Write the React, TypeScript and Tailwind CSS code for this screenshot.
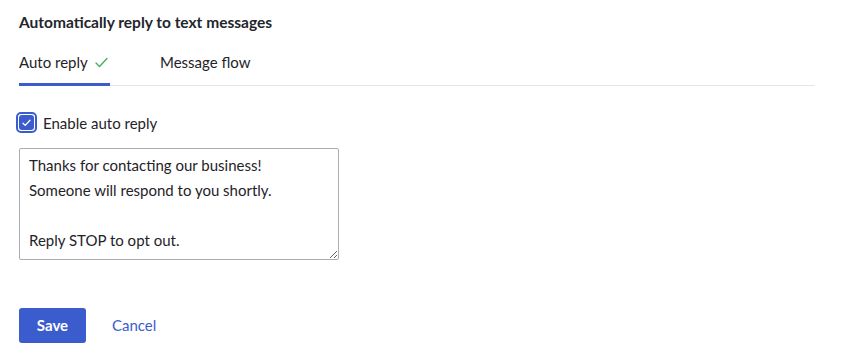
import React from "react";

export default function App() {
  return (
    <div className="w-[845px] h-[358px] bg-white text-[#1f2329] font-['Lato',sans-serif] pl-[19px] pt-[13px]">
      <h1 className="text-[15.5px] font-bold leading-[19px] text-[#22262b]">Automatically reply to text messages</h1>
      <div className="mt-[20px] w-[796px] flex border-b border-[#e3e5ea]">
        <div className="w-[91px] h-[34px] flex items-start border-b-[3px] border-[#3a5ccc] -mb-px">
          <span className="text-[15px] leading-[20px]">Auto reply</span>
          <svg className="ml-[7px] mt-[5px]" width="13" height="11" viewBox="0 0 13 11" fill="none">
            <path d="M1 6l3.5 3.5L12 1.5" stroke="#3fae5a" strokeWidth="1.3" strokeLinecap="round" strokeLinejoin="round" />
          </svg>
        </div>
        <div className="ml-[50px] text-[15px] leading-[20px]">Message flow</div>
      </div>
      <label className="mt-[26px] flex items-center -ml-[3px] h-[21px]">
        <span className="w-[21px] h-[21px] rounded-[5px] border-[2.5px] border-[#3a5ccc] p-[1px] flex">
          <span className="flex-1 rounded-[3px] bg-[#3a5ccc] flex items-center justify-center">
            <svg width="9" height="8" viewBox="0 0 9 8" fill="none">
              <path d="M1 4.2l2.2 2.2L8 1.3" stroke="white" strokeWidth="1.3" strokeLinecap="round" strokeLinejoin="round" />
            </svg>
          </span>
        </span>
        <span className="ml-[6px] text-[15px] leading-[20px]">Enable auto reply</span>
      </label>
      <textarea
        className="mt-[15px] block w-[320px] h-[112px] border border-[#a9adb4] rounded-[2px] px-[9px] pt-[4px] text-[15px] leading-[25px] text-[#1f2329] resize-y outline-none font-['Lato',sans-serif]"
        defaultValue={"Thanks for contacting our business!\nSomeone will respond to you shortly.\n\nReply STOP to opt out."}
      />
      <div className="mt-[48px] flex items-center">
        <button className="w-[67px] h-[35px] rounded-[3px] bg-[#3a5ccc] text-white text-[15px] font-bold">Save</button>
        <button className="ml-[26px] text-[15px] text-[#3a5ccc]">Cancel</button>
      </div>
    </div>
  );
}
